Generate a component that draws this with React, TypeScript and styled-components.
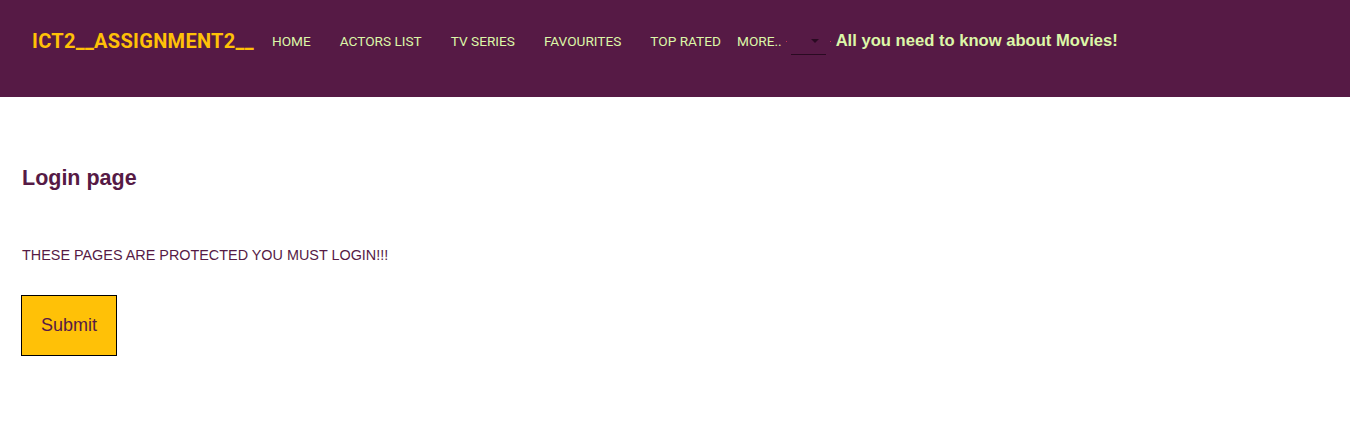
import React from "react";
import styled, { createGlobalStyle } from "styled-components";

const Global = createGlobalStyle`
  html, body { margin: 0; padding: 0; background: #fff; }
  body { font-family: "Liberation Sans", Arial, sans-serif; }
`;

const Header = styled.header`
  height: 97px;
  background: #561a45;
  display: flex;
  align-items: flex-start;
  padding: 29px 0 0 32px;
  box-sizing: border-box;
`;

const Logo = styled.div`
  font-family: Roboto, sans-serif;
  font-weight: 700;
  font-size: 20px;
  line-height: 24px;
  letter-spacing: 0.3px;
  color: #ffc107;
`;

const Nav = styled.nav`
  display: flex;
  align-items: center;
  height: 24px;
`;

const NavLink = styled.a<{ $gap: number }>`
  font-family: Roboto, sans-serif;
  font-weight: 400;
  font-size: 13.65px;
  text-transform: uppercase;
  color: #dcf7a8;
  text-decoration: none;
  margin-left: ${(p) => p.$gap}px;
`;

const Dot = styled.span`
  width: 1px;
  height: 1px;
  background: #c8324f;
  margin: 0 4px;
`;

const SelectBox = styled.div`
  align-self: flex-start;
  width: 35px;
  height: 26px;
  border-bottom: 1px solid #2a0a22;
  box-sizing: border-box;
  display: flex;
  align-items: flex-start;
  justify-content: flex-end;
  padding: 10px 7px 0 0;
`;

const Arrow = styled.span`
  width: 0;
  height: 0;
  border-left: 4px solid transparent;
  border-right: 4px solid transparent;
  border-top: 4px solid #2a0a22;
`;

const Tagline = styled.div`
  font-family: "Liberation Sans", Arial, sans-serif;
  font-weight: 700;
  font-size: 16.6px;
  color: #dcf7a8;
  line-height: 24px;
  margin-left: 1px;
`;

const Main = styled.main`
  padding: 0 21px;
`;

const Title = styled.h3`
  margin: 69px 0 0;
  font-size: 21.5px;
  font-weight: 700;
  color: #561a45;
  line-height: 24px;
  padding-left: 1px;
`;

const Notice = styled.p`
  margin: 57px 0 0;
  font-size: 14.4px;
  color: #561a45;
  line-height: 16px;
  padding-left: 1px;
`;

const SubmitButton = styled.button`
  margin-top: 32px;
  width: 96px;
  height: 61px;
  background: #ffc107;
  border: 1px solid #000;
  color: #561a45;
  font-family: "Liberation Sans", Arial, sans-serif;
  font-size: 18px;
  padding: 0;
  display: block;
`;

export default function App() {
  const links: [string, number][] = [
    ["Home", 18],
    ["Actors List", 29],
    ["TV Series", 29],
    ["Favourites", 29],
    ["Top Rated", 29],
    ["More..", 16],
  ];
  return (
    <>
      <Global />
      <Header>
        <Logo>ICT2__ASSIGNMENT2__</Logo>
        <Nav>
          {links.map(([l, g]) => (
            <NavLink key={l} href="#" $gap={g}>
              {l}
            </NavLink>
          ))}
          <Dot />
          <SelectBox>
            <Arrow />
          </SelectBox>
          <Dot />
          <Tagline>All you need to know about Movies!</Tagline>
        </Nav>
      </Header>
      <Main>
        <Title>Login page</Title>
        <Notice>THESE PAGES ARE PROTECTED YOU MUST LOGIN!!!</Notice>
        <SubmitButton>Submit</SubmitButton>
      </Main>
    </>
  );
}
